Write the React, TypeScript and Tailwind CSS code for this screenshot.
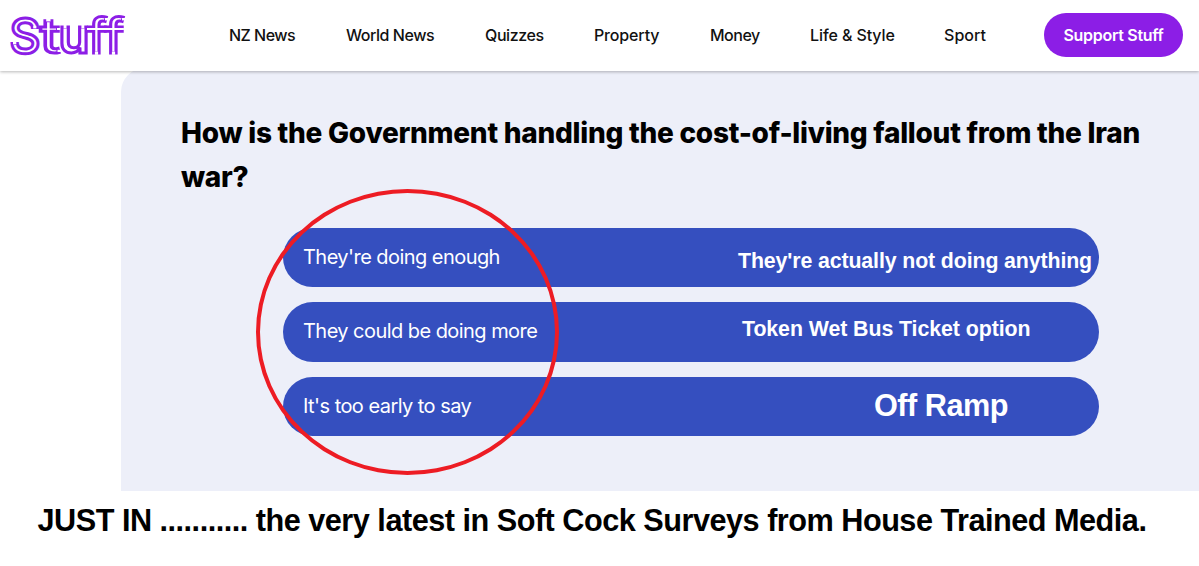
const navItems = [
  { label: "NZ News", className: "w-[117px] tracking-[-0.5px]" },
  { label: "World News", className: "w-[139px] tracking-[-0.45px]" },
  { label: "Quizzes", className: "w-[109px] tracking-[-0.4px]" },
  { label: "Property", className: "w-[116px] tracking-[-0.15px]" },
  { label: "Money", className: "w-[100px] tracking-[-0.5px]" },
  { label: "Life & Style", className: "w-[134px] tracking-[-0.1px]" },
  { label: "Sport", className: "w-[100px] tracking-[0.05px]" },
];

const options = [
  {
    label: "They're doing enough",
    note: "They're actually not doing anything",
    noteClass: "left-[455px] top-[19px] text-[21.33px] leading-[28px] tracking-[-0.12px]",
  },
  {
    label: "They could be doing more",
    note: "Token Wet Bus Ticket option",
    noteClass: "left-[459px] top-[13px] text-[21.33px] leading-[28px] tracking-[-0.07px]",
  },
  {
    label: "It's too early to say",
    note: "Off Ramp",
    noteClass: "left-[591px] top-[10px] text-[30.67px] leading-[36px] tracking-[-0.5px]",
  },
];

// white cuts that open the ends of the double line, x y w h
const cuts = [
  [25.2, 24.8, 3.2, 2.6],
  [5, 40.4, 3.3, 3],
  [38.2, 17.4, 4.3, 3],
  [49, 27, 3.2, 2],
  [49.5, 48.8, 3.5, 2.2],
  [86.9, 50.6, 3.2, 3.2],
  [103.9, 50.6, 3.2, 3.2],
  [97, 17, 3.2, 2.4],
  [114, 17, 3.8, 2.4],
  [79, 27, 36.9, 2],
  [55.6, 24, 2.9, 3.2],
  [73.4, 24, 2.9, 3.2],
];

function Logo() {
  return (
    <svg width="120" height="70" viewBox="0 0 120 70" className="ml-[8px] shrink-0">
      <g
        fontFamily="Inter, sans-serif"
        fontSize="48"
        fontWeight="500"
        fill="#fff"
        stroke="#8c1ee6"
        strokeWidth="3"
      >
        <text x="1.5" y="52" textLength="31" lengthAdjust="spacingAndGlyphs">S</text>
        <text x="32" y="52" textLength="20" lengthAdjust="spacingAndGlyphs">t</text>
        <text x="50.5" y="52" fontWeight="600" textLength="31" lengthAdjust="spacingAndGlyphs" style={{ fontVariantCaps: "small-caps" }}>u</text>
        <text x="80" y="52" textLength="19" lengthAdjust="spacingAndGlyphs">f</text>
        <text x="97" y="52" textLength="19" lengthAdjust="spacingAndGlyphs">f</text>
      </g>
      {cuts.map(([x, y, w, h]) => (
        <rect key={`${x}-${y}`} x={x} y={y} width={w} height={h} fill="#fff" />
      ))}
    </svg>
  );
}

function Header() {
  return (
    <header className="relative z-10 flex h-[71px] items-center bg-white shadow-[0_1px_3px_rgba(0,0,0,0.28)]">
      <Logo />
      <nav className="ml-[101px] flex pb-px text-base font-medium text-[#111]">
        {navItems.map((item) => (
          <a key={item.label} href="#" className={`${item.className} whitespace-nowrap`}>
            {item.label}
          </a>
        ))}
      </nav>
      <button className="mb-[2px] h-11 w-[139px] shrink-0 whitespace-nowrap rounded-full bg-[#8c1ee6] text-base font-semibold tracking-[-0.3px] text-white">
        Support Stuff
      </button>
    </header>
  );
}

export default function App() {
  return (
    <div className="h-[566px] w-[1199px] overflow-hidden bg-white font-['Inter',sans-serif]">
      <Header />
      <main className="relative -mt-[3px] ml-[121px] h-[423px] rounded-tl-3xl bg-[#edeff9] pl-[60px] pt-[44px]">
        <h1 className="w-[1010px] text-[28px] font-extrabold leading-[43.5px] tracking-[-0.26px] text-black">
          <span className="block whitespace-nowrap">How is the Government handling the cost-of-living fallout from the Iran</span>
          <span className="block">war?</span>
        </h1>
        <div className="ml-[102px] mt-[28.5px] flex w-[816px] flex-col gap-[15px]">
          {options.map((option) => (
            <button
              key={option.label}
              className="relative flex h-[59.5px] items-center rounded-full bg-[#354fbf] pb-px pl-[20px] text-left text-xl tracking-[-0.55px] text-white"
            >
              <span>{option.label}</span>
              <span
                className={`absolute whitespace-nowrap font-['Liberation_Sans',sans-serif] font-bold ${option.noteClass}`}
              >
                {option.note}
              </span>
            </button>
          ))}
        </div>
        {/* red ring around the answers */}
        <div className="pointer-events-none absolute left-[135px] top-[121px] h-[286px] w-[303px] rounded-[50%] border-4 border-[#ed1c24]" />
      </main>
      <p className="ml-[37.5px] mt-[11px] whitespace-nowrap font-['Liberation_Sans',sans-serif] text-[30.67px] font-bold leading-[36px] tracking-[-0.5px] text-black">
        JUST IN ........... the very latest in Soft Cock Surveys from House Trained Media.
      </p>
    </div>
  );
}
